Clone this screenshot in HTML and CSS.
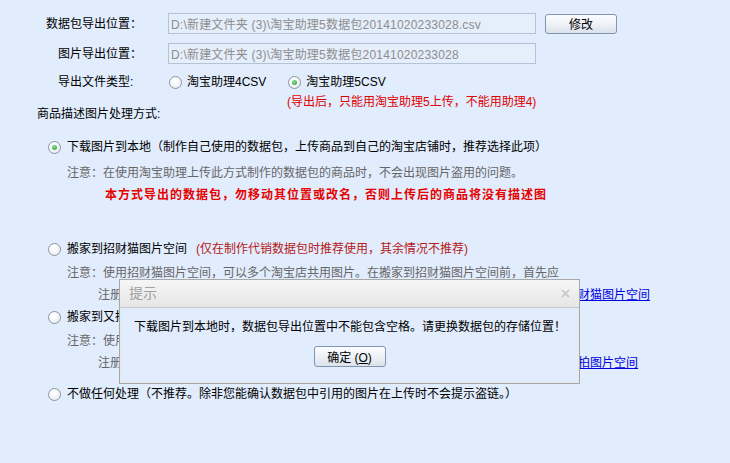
FILE: index.html
```html
<!DOCTYPE html>
<html>
<head>
    <meta charset="utf-8">
    <title>导出数据包</title>
    <link rel="stylesheet" href="styles.css">
</head>
<body>
<div class="export">
    <div class="field field-first">
        <span class="field-label">数据包导出位置：</span>
        <input class="path" type="text" readonly value="D:\新建文件夹 (3)\淘宝助理5数据包20141020233028.csv">
        <button class="btn btn-edit">修改</button>
    </div>
    <div class="field">
        <span class="field-label">图片导出位置：</span>
        <input class="path" type="text" readonly value="D:\新建文件夹 (3)\淘宝助理5数据包20141020233028">
    </div>
    <div class="field field-type">
        <span class="field-label field-label-left">导出文件类型:</span>
        <label class="choice"><span class="radio"></span>淘宝助理4CSV</label>
        <label class="choice choice-second"><span class="radio checked"></span>淘宝助理5CSV</label>
    </div>
    <div class="type-tip">(导出后，只能用淘宝助理5上传，不能用助理4)</div>
    <div class="section-title">商品描述图片处理方式:</div>

    <!-- 图片处理方式 -->
    <div class="method method-download">
        <div class="method-line"><span class="radio checked"></span>下载图片到本地（制作自己使用的数据包，上传商品到自己的淘宝店铺时，推荐选择此项）</div>
        <div class="method-note">注意：在使用淘宝助理上传此方式制作的数据包的商品时，不会出现图片盗用的问题。</div>
        <div class="method-warn">本方式导出的数据包，勿移动其位置或改名，否则上传后的商品将没有描述图</div>
    </div>
    <div class="method method-zcm">
        <div class="method-line"><span class="radio"></span>搬家到招财猫图片空间<span class="method-tip">(仅在制作代销数据包时推荐使用，其余情况不推荐)</span></div>
        <div class="method-note">注意：使用招财猫图片空间，可以多个淘宝店共用图片。在搬家到招财猫图片空间前，首先应</div>
        <div class="method-reg">注册一个招财猫图片空间帐号，并将其与您的淘宝店铺进行绑定。注册地址在这里：<a href="#">注册招财猫图片空间</a></div>
    </div>
    <div class="method method-upyun">
        <div class="method-line"><span class="radio"></span>搬家到又拍图片空间<span class="method-tip">(仅在制作代销数据包时推荐使用)</span></div>
        <div class="method-note">注意：使用又拍图片空间，可以多个淘宝店共用图片。首先应</div>
        <div class="method-reg">注册一个又拍图片空间帐号，并将其与您的淘宝店铺进行绑定。注册地址请在这里：<a href="#">注册又拍图片空间</a></div>
    </div>
    <div class="method method-none">
        <div class="method-line"><span class="radio"></span>不做任何处理（不推荐。除非您能确认数据包中引用的图片在上传时不会提示盗链。）</div>
    </div>
</div>

<!-- 提示对话框 -->
<div class="dialog">
    <div class="dialog-title">
        提示
        <svg class="dialog-close" width="9" height="9" viewBox="0 0 9 9">
            <path d="M1 1L8 8M8 1L1 8" stroke="#c3c3c3" stroke-width="1.6" fill="none"/>
        </svg>
    </div>
    <div class="dialog-body">
        <div class="dialog-msg">下载图片到本地时，数据包导出位置中不能包含空格。请更换数据包的存储位置！</div>
        <div class="dialog-actions"><button class="btn btn-ok">确定 (<u>O</u>)</button></div>
    </div>
</div>
</body>
</html>
```

FILE: styles.css
```css
html,body,div,span,label{margin:0;padding:0;}
*{box-sizing:border-box;}
body{
    background:#e1ecfc;
    font-family:"Liberation Sans","Noto Sans CJK SC",sans-serif;
    font-size:12px; line-height:20px; color:#000;
    position:relative; height:463px; overflow:hidden;
}

/* 顶部导出设置 */
.field{display:flex; align-items:center; height:21px; margin-top:9px;}
.field-first{margin-top:13px;}
.field-type{height:20px; margin-top:8px;}
.field-label{width:168px; padding-right:26px; text-align:right; flex:none;}
.field-label-left{text-align:left; padding:0 0 0 58px;}

.path{
    width:368px; height:21px; padding:0 2px;
    border:1px solid #b3c2d6; background:#e5eefb;
    font-family:"Liberation Sans","Noto Sans CJK SC",sans-serif;
    font-size:12px; color:#8d8d8d; outline:0; letter-spacing:0.2px;
}

.btn{
    border:1px solid #7f94b0; border-radius:3px;
    background:linear-gradient(#fbfcfe,#eef2f7 50%,#dbe2eb);
    font-family:"Liberation Sans","Noto Sans CJK SC",sans-serif;
    font-size:12px; color:#000; padding:0; cursor:pointer;
}
.btn-edit{width:72px; height:20px; margin-left:9px;}

.choice{display:flex; align-items:center; margin-left:1px;}
.choice .radio{margin-right:5px;}
.choice-second{margin-left:22px;}

/* 单选框 */
.radio{
    display:inline-block; position:relative; flex:none;
    width:13px; height:13px; border-radius:50%;
    border:1px solid #8b96a3;
    background:radial-gradient(circle at 40% 35%,#ffffff 20%,#dfe3e8 100%);
}
.radio.checked:after{
    content:''; position:absolute; left:3px; top:3px;
    width:5px; height:5px; border-radius:50%;
    background:radial-gradient(circle at 40% 35%,#8fe08f,#1f9a2a);
}

.type-tip{line-height:12px; margin-top:4px; padding-left:287px; color:#e00000;}
.section-title{line-height:12px; padding-left:37px;}

/* 图片处理方式 */
.method-download{margin-top:17px;}
.method-zcm{margin-top:34px;}
.method-upyun{margin-top:2px;}
.method-none{margin-top:11px;}

.method-line{display:flex; align-items:center; height:20px; padding-left:48px; white-space:nowrap;}
.method-line .radio{margin-right:6px;}
.method-tip{color:#b52020; margin-left:9px;}
.method-note{padding-left:67px; margin-top:4px; color:#666; white-space:nowrap;}
.method-download .method-note{margin-top:6px;}
.method-warn{
    padding-left:105px; margin-top:2px;
    color:#e60000; font-weight:bold; letter-spacing:1px; white-space:nowrap;
}
.method-reg{padding-left:98px; margin-top:2px; color:#666; white-space:nowrap;}
.method-reg a{color:#0000e0; text-decoration:underline;}

/* 提示对话框，浮在内容之上 */
.dialog{
    position:absolute; left:119px; top:279px;
    width:461px; height:105px;
    border:1px solid #a8a8a8;
    box-shadow:inset 0 0 0 1px #e8e8e8;
    background:#e1ecfc;
}
.dialog-title{
    position:relative; height:28px; line-height:27px;
    padding-left:9px; font-size:14px; color:#a0a0a0;
    background:linear-gradient(#f6f6f6,#e6e6e6);
    border-bottom:1px solid #c9c9c9;
}
.dialog-close{position:absolute; right:9px; top:9px;}
.dialog-body{padding:9px 0 0 14px;}
.dialog-msg{height:20px;}
.dialog-actions{display:flex; justify-content:center; margin:9px 0 0 -14px;}
.btn-ok{width:72px; height:21px;}
```
